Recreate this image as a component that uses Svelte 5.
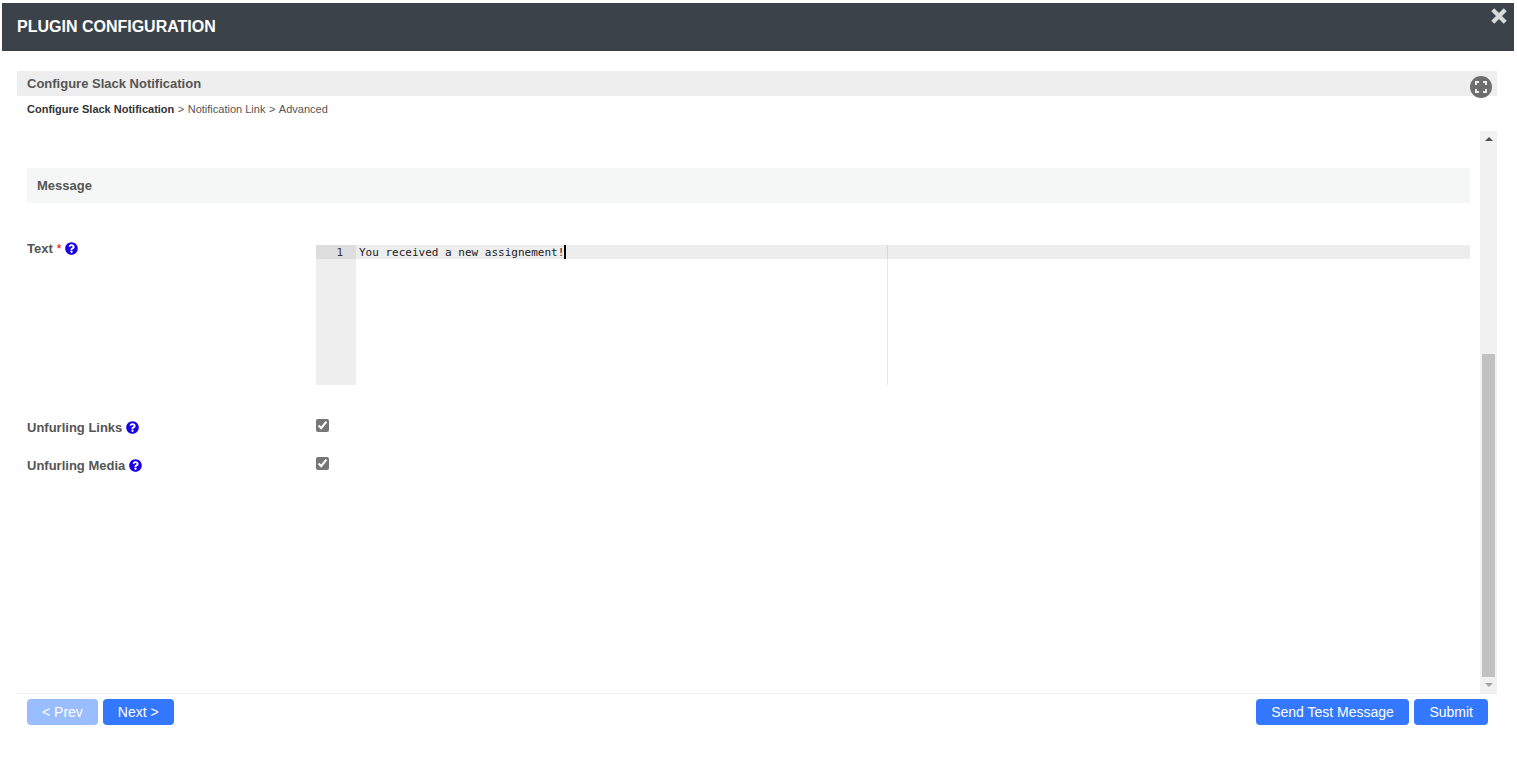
<script lang="ts">
const crumbs = ["Notification Link", "Advanced"];
const questionPath = "M504 256c0 136.997-111.043 248-248 248S8 392.997 8 256C8 119.083 119.043 8 256 8s248 111.083 248 248zM262.655 90c-54.497 0-89.255 22.957-116.549 63.758-3.536 5.286-2.353 12.415 2.715 16.258l34.699 26.31c5.205 3.947 12.621 3.008 16.665-2.122 17.864-22.658 30.113-35.797 57.303-35.797 20.429 0 45.698 13.148 45.698 32.958 0 14.976-12.363 22.667-32.534 33.976C247.128 238.528 216 254.941 216 296v4c0 6.627 5.373 12 12 12h56c6.627 0 12-5.373 12-12v-1.333c0-28.462 83.186-29.647 83.186-106.667 0-58.002-60.165-102-116.531-102zM256 338c-25.365 0-46 20.635-46 46 0 25.364 20.635 46 46 46s46-20.636 46-46c0-25.365-20.635-46-46-46z";
</script>

{#snippet help()}
	<svg class="help" viewBox="0 0 512 512" aria-hidden="true"><path d={questionPath} /></svg>
{/snippet}

<div class="modal">
	<header class="modal-header">
		<h1>PLUGIN CONFIGURATION</h1>
		<svg class="close" viewBox="0 0 16 16" aria-hidden="true">
			<path d="M3 3l10 10M13 3L3 13" />
		</svg>
	</header>

	<div class="modal-body">
		<div class="title-bar">
			<span>Configure Slack Notification</span>
			<span class="expand">
				<svg viewBox="0 0 22 22" aria-hidden="true">
					<path d="M6 9v-3h3M13 6h3v3M16 13v3h-3M9 16h-3v-3" />
				</svg>
			</span>
		</div>

		<div class="crumbs">
			<b>Configure Slack Notification</b>
			{#each crumbs as crumb}
				<span class="sep">&gt;</span>
				<span>{crumb}</span>
			{/each}
		</div>

		<div class="scroller">
			<div class="form">
				<div class="section">Message</div>

				<div class="row text-row">
					<div class="label">Text <em>*</em> {@render help()}</div>
					<div class="editor">
						<div class="gutter"><div class="gutter-line">1</div></div>
						<div class="code">
							<div class="print-margin"></div>
							<div class="code-line">You received a new assignement!<i class="cursor"></i></div>
						</div>
					</div>
				</div>

				<div class="row check-row first">
					<div class="label">Unfurling Links {@render help()}</div>
					<input type="checkbox" checked />
				</div>
				<div class="row check-row">
					<div class="label">Unfurling Media {@render help()}</div>
					<input type="checkbox" checked />
				</div>
			</div>

			<div class="scrollbar">
				<span class="arrow up"></span>
				<div class="track"><div class="thumb"></div></div>
				<span class="arrow down"></span>
			</div>
		</div>

		<footer class="actions">
			<div class="group">
				<button class="btn disabled">&lt; Prev</button>
				<button class="btn">Next &gt;</button>
			</div>
			<div class="group">
				<button class="btn wide">Send Test Message</button>
				<button class="btn">Submit</button>
			</div>
		</footer>
	</div>
</div>

<style>
	:global(body) {
		background: #fff;
		font-family: "Liberation Sans", Arial, sans-serif;
	}

	.modal {
		width: 1512px;
		margin: 3px 0 0 2px;
	}

	.modal-header {
		height: 48px;
		background: #3b424a;
		display: flex;
		align-items: center;
		justify-content: space-between;
		padding-left: 15px;
		position: relative;
	}

	h1 {
		margin: 0;
		color: #fff;
		font-size: 16px;
		font-weight: bold;
	}

	.close {
		position: absolute;
		top: 3px;
		right: 5px;
		width: 20px;
		height: 20px;
	}

	.close path {
		stroke: #d9d9d9;
		stroke-width: 3.4;
		fill: none;
	}

	.modal-body {
		padding: 20px 17px 0 15px;
	}

	.title-bar {
		height: 25px;
		background: #eee;
		padding-left: 10px;
		display: flex;
		align-items: center;
		font-size: 13px;
		font-weight: bold;
		color: #555;
		position: relative;
	}

	.expand {
		position: absolute;
		top: 5px;
		right: 5px;
		width: 22px;
		height: 22px;
		border-radius: 50%;
		background: #6e6e6e;
	}

	.expand svg {
		display: block;
		width: 22px;
		height: 22px;
	}

	.expand path {
		fill: none;
		stroke: #eee;
		stroke-width: 2;
	}

	.crumbs {
		height: 35px;
		padding: 7px 0 0 10px;
		box-sizing: border-box;
		font-size: 11px;
		line-height: 13px;
		color: #555;
		display: flex;
		gap: 3.5px;
	}

	.crumbs b {
		color: #333;
	}

	.scroller {
		height: 563px;
		display: flex;
		border-bottom: 1px solid #eee;
		box-sizing: border-box;
	}

	.form {
		flex: 1;
		padding: 37px 10px 0 10px;
	}

	.section {
		height: 35px;
		line-height: 36px;
		background: #f5f7f7;
		padding-left: 10px;
		font-size: 13px;
		font-weight: bold;
		color: #555;
	}

	.row {
		display: flex;
	}

	.text-row {
		margin-top: 42px;
	}

	.text-row .label {
		margin-top: -3px;
	}

	.label {
		width: 289px;
		flex: none;
		font-size: 13px;
		line-height: 14px;
		font-weight: bold;
		color: #555;
	}

	.label em {
		color: #e00;
		font-style: normal;
		font-weight: normal;
	}

	.help {
		width: 13px;
		height: 13px;
		vertical-align: -2px;
	}

	.help path {
		fill: #1a00e6;
	}

	.editor {
		flex: 1;
		height: 140px;
		display: flex;
		font: 11px/14px "DejaVu Sans Mono", monospace;
		color: #222;
	}

	.gutter {
		width: 40px;
		background: #eee;
	}

	.gutter-line {
		background: #ddd;
		height: 14px;
		text-align: right;
		padding-right: 13px;
		color: #333;
		line-height: 15px;
	}

	.code {
		flex: 1;
		position: relative;
	}

	.print-margin {
		position: absolute;
		left: 531px;
		top: 0;
		bottom: 0;
		width: 1px;
		background: #e8e8e8;
	}

	.code-line {
		position: relative;
		height: 14px;
		line-height: 15px;
		padding-left: 3px;
		background: rgba(0, 0, 0, 0.07);
	}

	.cursor {
		display: inline-block;
		width: 2px;
		height: 14px;
		background: #000;
		vertical-align: top;
	}

	.check-row {
		margin-top: 24px;
		height: 14px;
	}

	.check-row.first {
		margin-top: 35px;
	}

	.check-row .label {
		padding-top: 1px;
	}

	.check-row input {
		margin: -1px 0 0 0;
		width: 13px;
		height: 13px;
		accent-color: #767676;
	}

	.scrollbar {
		width: 17px;
		background: #f1f1f1;
		display: flex;
		flex-direction: column;
		align-items: center;
	}

	.track {
		flex: 1;
		width: 100%;
		padding-top: 207px;
		box-sizing: border-box;
	}

	.thumb {
		height: 323px;
		background: #c1c1c1;
		margin: 0 2px;
	}

	.arrow {
		width: 0;
		height: 0;
		border-left: 4px solid transparent;
		border-right: 4px solid transparent;
		margin: 6px 0;
	}

	.arrow.up {
		border-bottom: 4px solid #505050;
	}

	.arrow.down {
		border-top: 4px solid #a3a3a3;
	}

	.actions {
		display: flex;
		justify-content: space-between;
		padding: 5px 9px 0 10px;
	}

	.group {
		display: flex;
		gap: 5px;
	}

	.btn {
		height: 26px;
		padding: 0 15px;
		border: none;
		border-radius: 4px;
		background: #3478ff;
		color: #fff;
		font: 14px "Liberation Sans", Arial, sans-serif;
	}

	.btn.wide {
		padding: 0 15.5px;
	}

	.btn.disabled {
		background: #99bdff;
	}
</style>
